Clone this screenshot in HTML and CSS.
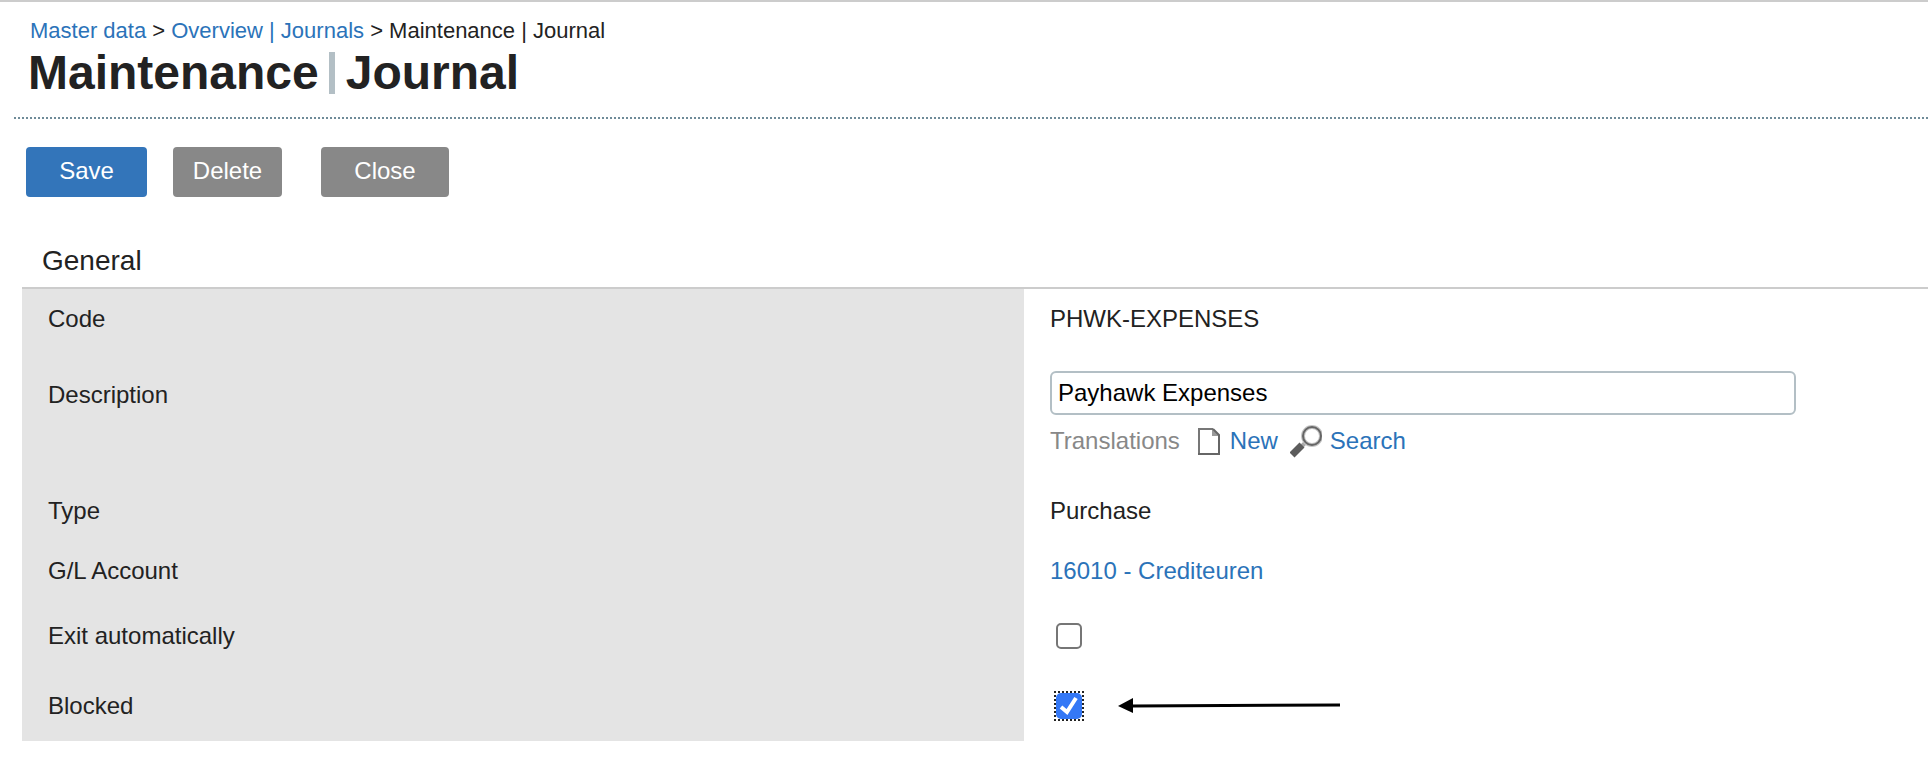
FILE: index.html
```html
<!DOCTYPE html>
<html lang="en">
<head>
    <meta charset="UTF-8">
    <meta name="viewport" content="width=device-width, initial-scale=1.0">
    <title>Maintenance | Journal</title>
    <link rel="stylesheet" href="styles.css">
</head>
<body>
    <header class="page-header">
        <nav class="breadcrumbs">
            <a href="#">Master data</a> &gt; <a href="#">Overview | Journals</a> &gt; Maintenance | Journal
        </nav>
        <h1 class="page-title">Maintenance<span class="title-separator"></span>Journal</h1>
    </header>

    <form class="journal-form">
        <div class="toolbar">
            <button type="submit" class="btn btn-save">Save</button>
            <button type="button" class="btn btn-delete">Delete</button>
            <button type="button" class="btn btn-close">Close</button>
        </div>

        <h2 class="section-title">General</h2>
        <div class="fields">
            <div class="row row-code">
                <div class="label">Code</div>
                <div class="value">PHWK-EXPENSES</div>
            </div>
            <div class="row row-description">
                <div class="label"><label for="description">Description</label></div>
                <div class="value">
                    <input type="text" id="description" class="text-input" value="Payhawk Expenses">
                    <div class="translations">
                        <span class="muted">Translations</span>
                        <a href="#" class="icon-link">
                            <svg width="24" height="28" viewBox="0 0 24 28">
                                <path d="M1 2H15L21 8V27H1Z" fill="#fff"/>
                                <path d="M14 2L22 9H14Z" fill="#999"/>
                                <path d="M1 27V2H15" fill="none" stroke="#777" stroke-width="2"/>
                                <path d="M15 2L21 8V27H0" fill="none" stroke="#666" stroke-width="2"/>
                            </svg>
                            New
                        </a>
                        <a href="#" class="icon-link">
                            <svg width="32" height="34" viewBox="0 0 32 34">
                                <path d="M15 19L11 23" stroke="#aaa" stroke-width="4"/>
                                <path d="M12 21L2 31" stroke="#5c5c5c" stroke-width="7"/>
                                <circle cx="22" cy="12" r="9" fill="#fff" stroke="#c4c4c4" stroke-width="4"/>
                                <circle cx="22" cy="12" r="9" fill="none" stroke="#666" stroke-width="2"/>
                            </svg>
                            Search
                        </a>
                    </div>
                </div>
            </div>
            <div class="row row-type">
                <div class="label">Type</div>
                <div class="value">Purchase</div>
            </div>
            <div class="row row-account">
                <div class="label">G/L Account</div>
                <div class="value"><a href="#">16010 - Crediteuren</a></div>
            </div>
            <div class="row row-exit">
                <div class="label"><label for="exitAuto">Exit automatically</label></div>
                <div class="value"><input type="checkbox" id="exitAuto" class="checkbox"></div>
            </div>
            <div class="row row-blocked">
                <div class="label"><label for="blocked">Blocked</label></div>
                <div class="value">
                    <span class="focus-ring"><input type="checkbox" id="blocked" class="checkbox" checked></span>
                    <svg width="222" height="16" viewBox="0 0 222 16">
                        <path d="M0 8L15 0V15Z" fill="#000"/>
                        <path d="M14 8L222 7" stroke="#000" stroke-width="3"/>
                    </svg>
                </div>
            </div>
        </div>
    </form>
</body>
</html>
```

FILE: styles.css
```css
* {
    box-sizing: border-box;
}

body {
    margin: 0;
    border-top: 2px solid #ccc;
    background-color: #fff;
    color: #222;
    font-family: "Liberation Sans", Arial, sans-serif;
    font-size: 24px;
    line-height: 28px;
}

a {
    color: #2b73b9;
    text-decoration: none;
}

.page-header {
    margin-left: 14px;
    padding: 15px 0 16px 14px;
    border-bottom: 2px dotted #6f8b98;
}

.breadcrumbs {
    padding-left: 2px;
    font-size: 22px;
}

.page-title {
    display: flex;
    align-items: center;
    margin: 0;
    font-size: 48px;
    line-height: 56px;
}

.title-separator {
    width: 6px;
    height: 42px;
    margin: 0 11px 0 10px;
    background-color: #b3bfc5;
}

.toolbar {
    display: flex;
    padding: 28px 26px 0;
}

.btn {
    height: 50px;
    padding: 0 0 2px;
    border: 0;
    border-radius: 4px;
    background-color: #888;
    color: #fff;
    font: inherit;
    cursor: pointer;
}

.btn-save {
    width: 121px;
    background-color: #3375ba;
}

.btn-delete {
    width: 109px;
    margin-left: 26px;
}

.btn-close {
    width: 128px;
    margin-left: 39px;
}

.section-title {
    margin: 44px 0 0 22px;
    padding: 4px 20px 10px;
    border-bottom: 2px solid #ccc;
    font-size: 28px;
    font-weight: normal;
    line-height: 32px;
}

.fields {
    margin-left: 22px;
}

.row {
    display: grid;
    grid-template-columns: 1002fr 904fr;
}

.label,
.value {
    padding: 16px 26px 0;
}

.label {
    background-color: #e4e4e4;
}

.row-code {
    min-height: 66px;
}

.row-description {
    min-height: 126px;
}

.row-description .label {
    padding-top: 26px;
}

.row-type,
.row-account {
    min-height: 60px;
}

.row-exit,
.row-blocked {
    min-height: 70px;
}

.row-exit .label,
.row-blocked .label {
    padding-top: 21px;
}

.text-input {
    display: block;
    width: 746px;
    max-width: 100%;
    height: 44px;
    padding: 0 6px;
    border: 2px solid #b3bfc5;
    border-radius: 6px;
    background-color: #fff;
    color: #000;
    font: inherit;
}

.translations {
    display: flex;
    align-items: center;
    gap: 12px;
    height: 34px;
    margin-top: 9px;
}

.muted {
    margin-right: 6px;
    color: #888;
}

.icon-link {
    display: flex;
    align-items: center;
    gap: 8px;
}

.row-exit .value,
.row-blocked .value {
    display: flex;
    align-items: center;
    gap: 36px;
    padding: 0 32px;
}

.checkbox {
    display: block;
    appearance: none;
    width: 26px;
    height: 26px;
    margin: 0;
    border: 2px solid #767676;
    border-radius: 5px;
    background-color: #fff;
}

.checkbox:checked {
    border-color: #3478f6;
    background: #3478f6 url("data:image/svg+xml,%3Csvg xmlns='http://www.w3.org/2000/svg' viewBox='0 0 22 22'%3E%3Cpath d='M3 12L9 17L18 3' fill='none' stroke='%23fff' stroke-width='4'/%3E%3C/svg%3E") center / 22px no-repeat;
}

.focus-ring {
    outline: 2px dotted #222;
}
```
